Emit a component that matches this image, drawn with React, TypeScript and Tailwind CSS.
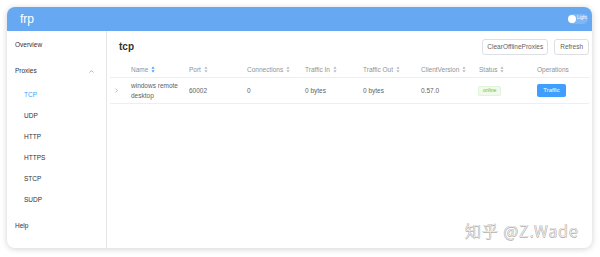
import React from "react";

const Sort = ({ active = false }: { active?: boolean }) => (
  <svg width="4" height="7" viewBox="0 0 4 7" className="ml-[3px] inline-block">
    <path d="M2 0.5 L3.6 2.8 L0.4 2.8 Z" fill={active ? "#409eff" : "#b4b8bf"} />
    <path d="M2 6.5 L3.6 4.2 L0.4 4.2 Z" fill={active ? "#409eff" : "#b4b8bf"} />
  </svg>
);

const cols = [
  { t: "Name", s: true, a: true },
  { t: "Port", s: true },
  { t: "Connections", s: true },
  { t: "Traffic In", s: true },
  { t: "Traffic Out", s: true },
  { t: "ClientVersion", s: true },
  { t: "Status", s: true },
  { t: "Operations", s: false },
];

export default function App() {
  const sub = ["TCP", "UDP", "HTTP", "HTTPS", "STCP", "SUDP"];
  return (
    <div
      className="relative w-[600px] h-[257px] bg-white overflow-hidden pl-[7px] pt-[7px]"
      style={{ fontFamily: "'Liberation Sans', Arial, sans-serif" }}
    >
      <div className="w-[585px] h-[241px] rounded-[8px] bg-white shadow-[0_1px_6px_rgba(0,0,0,0.18)] overflow-hidden flex flex-col">
        <div className="h-[24px] bg-[#66a9f2] flex items-center justify-between pl-[13px] pr-[4px] shrink-0">
          <span className="text-white text-[12px] leading-none">frp</span>
          <div className="flex items-center h-[10px] w-[20px] rounded-full bg-[#7fb7f4] relative">
            <div className="absolute left-[0px] top-[1px] w-[8px] h-[8px] rounded-full bg-white" />
            <span className="absolute left-[9px] top-[2px] text-white text-[4.5px] leading-none">Light</span>
          </div>
        </div>
        <div className="flex flex-1 min-h-0">
          <div className="w-[100px] border-r border-[#e6e6e6] shrink-0 text-[#303133] text-[6.5px]">
            <div className="h-[28px] flex items-center pl-[8px]">Overview</div>
            <div className="h-[24px] flex items-center justify-between pl-[8px] pr-[12px]">
              <span>Proxies</span>
              <svg width="5" height="3" viewBox="0 0 5 3">
                <path d="M0.5 2.5 L2.5 0.6 L4.5 2.5" stroke="#909399" strokeWidth="0.7" fill="none" />
              </svg>
            </div>
            <div className="pt-[1px]">
              {sub.map((s, i) => (
                <div key={s} className={`h-[21px] flex items-center pl-[17px] ${i === 0 ? "text-[#409eff]" : ""}`}>
                  {s}
                </div>
              ))}
            </div>
            <div className="h-[31px] flex items-center pl-[8px]">Help</div>
          </div>
          <div className="flex-1 pl-[3px] pr-[3px]">
            <div className="h-[31px] flex items-center justify-between pl-[9px]">
              <span className="text-[10px] font-bold text-[#303133]">tcp</span>
              <div className="flex gap-[6px] pt-[1px]">
                <button className="h-[16px] px-[4px] border border-[#dcdfe6] rounded-[3px] text-[6.5px] text-[#606266] bg-white">
                  ClearOfflineProxies
                </button>
                <button className="h-[16px] px-[5px] border border-[#dcdfe6] rounded-[3px] text-[6.5px] text-[#606266] bg-white">
                  Refresh
                </button>
              </div>
            </div>
            <div className="flex h-[16px] items-center border-b border-[#ebeef5] text-[6.5px] text-[#909399]">
              <div className="w-[15px]" />
              {cols.map((c) => (
                <div key={c.t} className="w-[58px] pl-[6px] flex items-center">
                  {c.t}
                  {c.s && <Sort active={c.a} />}
                </div>
              ))}
            </div>
            <div className="flex h-[26px] items-center border-b border-[#ebeef5] text-[6.5px] text-[#606266]">
              <div className="w-[15px] pl-[5px] flex items-center">
                <svg width="3" height="5" viewBox="0 0 3 5">
                  <path d="M0.6 0.6 L2.4 2.5 L0.6 4.4" stroke="#909399" strokeWidth="0.6" fill="none" />
                </svg>
              </div>
              <div className="w-[58px] pl-[6px] leading-[10px]">windows remote desktop</div>
              <div className="w-[58px] pl-[6px]">60002</div>
              <div className="w-[58px] pl-[6px]">0</div>
              <div className="w-[58px] pl-[6px]">0 bytes</div>
              <div className="w-[58px] pl-[6px]">0 bytes</div>
              <div className="w-[58px] pl-[6px]">0.57.0</div>
              <div className="w-[58px] pl-[5px]">
                <span className="inline-flex items-center h-[10px] px-[4px] rounded-[2px] bg-[#f0f9eb] border border-[#e1f3d8] text-[#67c23a] text-[5px]">
                  online
                </span>
              </div>
              <div className="w-[58px] pl-[6px]">
                <span className="inline-flex items-center justify-center h-[13px] w-[29px] rounded-[2px] bg-[#409eff] text-white text-[6px]">
                  Traffic
                </span>
              </div>
            </div>
          </div>
        </div>
      </div>
      <div
        className="absolute left-[465px] top-[222px] text-[16px] text-[#f2f2f2] leading-none tracking-[1px] font-light"
        style={{
          fontFamily: "'Noto Sans CJK SC', 'Liberation Sans', sans-serif",
          textShadow:
            "0.5px 0 0 #b0b0b0, -0.5px 0 0 #b0b0b0, 0 0.5px 0 #b0b0b0, 0 -0.5px 0 #b0b0b0",
        }}
      >
        知乎 @Z.Wade
      </div>
    </div>
  );
}
